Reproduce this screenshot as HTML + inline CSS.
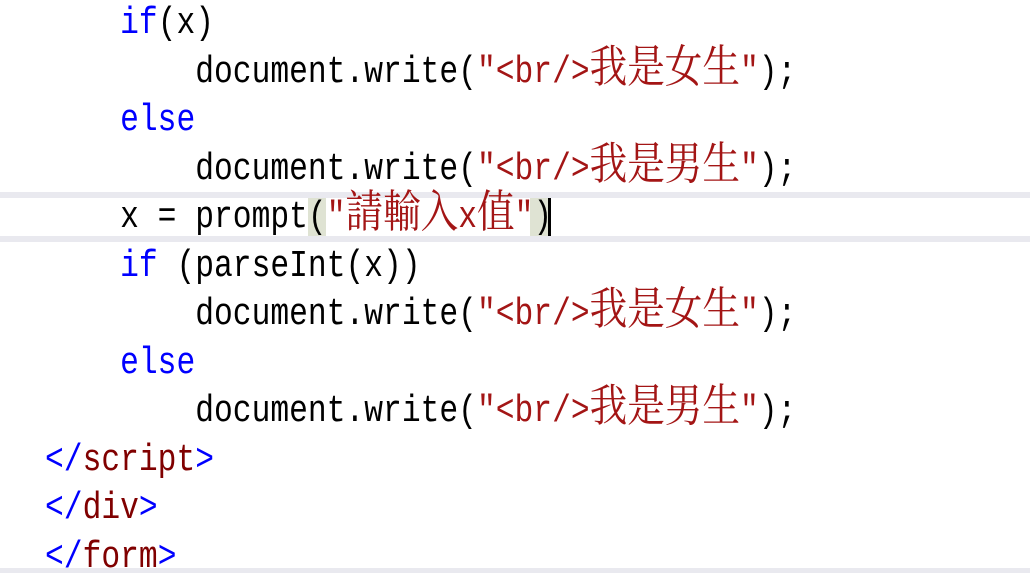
<!DOCTYPE html>
<html><head><meta charset="utf-8"><style>
html,body{margin:0;padding:0;background:#fff;width:1030px;height:573px;overflow:hidden;position:relative}
.ln{position:absolute;left:45px;height:48.5px;line-height:48.5px;white-space:pre;font-family:"Liberation Mono",monospace;font-size:31.3px;color:#000;transform:scaleY(1.2);transform-origin:0 55%}
.c{font-family:"Noto Serif CJK SC","Noto Sans CJK TC",serif;font-size:37.6px;line-height:0}
.k{color:#0000ff}.s{color:#a31515}.t{color:#800000}
.band{position:absolute;left:0;width:1030px;height:6px;background:#e9e9ef}
.hb{position:absolute;background:#dfe3d3;top:198px;height:38px}
</style></head><body>
<div class="band" style="top:192px"></div>
<div class="band" style="top:236px"></div>
<div class="band" style="top:568px;height:5px"></div>
<div class="hb" style="left:308px;width:18px"></div>
<div class="hb" style="left:530px;width:18px"></div>
<div style="position:absolute;left:548px;top:198px;width:3px;height:38px;background:#000"></div>

<div class="ln" style="top:1px">    <span class="k">if</span>(x)</div>
<div class="ln" style="top:49.5px">        document.write(<span class="s">"&lt;br/&gt;<span class="c">我是女生</span>"</span>);</div>
<div class="ln" style="top:98px">    <span class="k">else</span></div>
<div class="ln" style="top:146.5px">        document.write(<span class="s">"&lt;br/&gt;<span class="c">我是男生</span>"</span>);</div>
<div class="ln" style="top:195px">    x = prompt(<span class="s">"<span class="c">請輸入</span>x<span class="c">值</span>"</span>)</div>
<div class="ln" style="top:243.5px">    <span class="k">if</span> (parseInt(x))</div>
<div class="ln" style="top:292px">        document.write(<span class="s">"&lt;br/&gt;<span class="c">我是女生</span>"</span>);</div>
<div class="ln" style="top:340.5px">    <span class="k">else</span></div>
<div class="ln" style="top:389px">        document.write(<span class="s">"&lt;br/&gt;<span class="c">我是男生</span>"</span>);</div>
<div class="ln" style="top:437.5px"><span class="k">&lt;/</span><span class="t">script</span><span class="k">&gt;</span></div>
<div class="ln" style="top:486px"><span class="k">&lt;/</span><span class="t">div</span><span class="k">&gt;</span></div>
<div class="ln" style="top:534.5px"><span class="k">&lt;/</span><span class="t">form</span><span class="k">&gt;</span></div>
</body></html>
